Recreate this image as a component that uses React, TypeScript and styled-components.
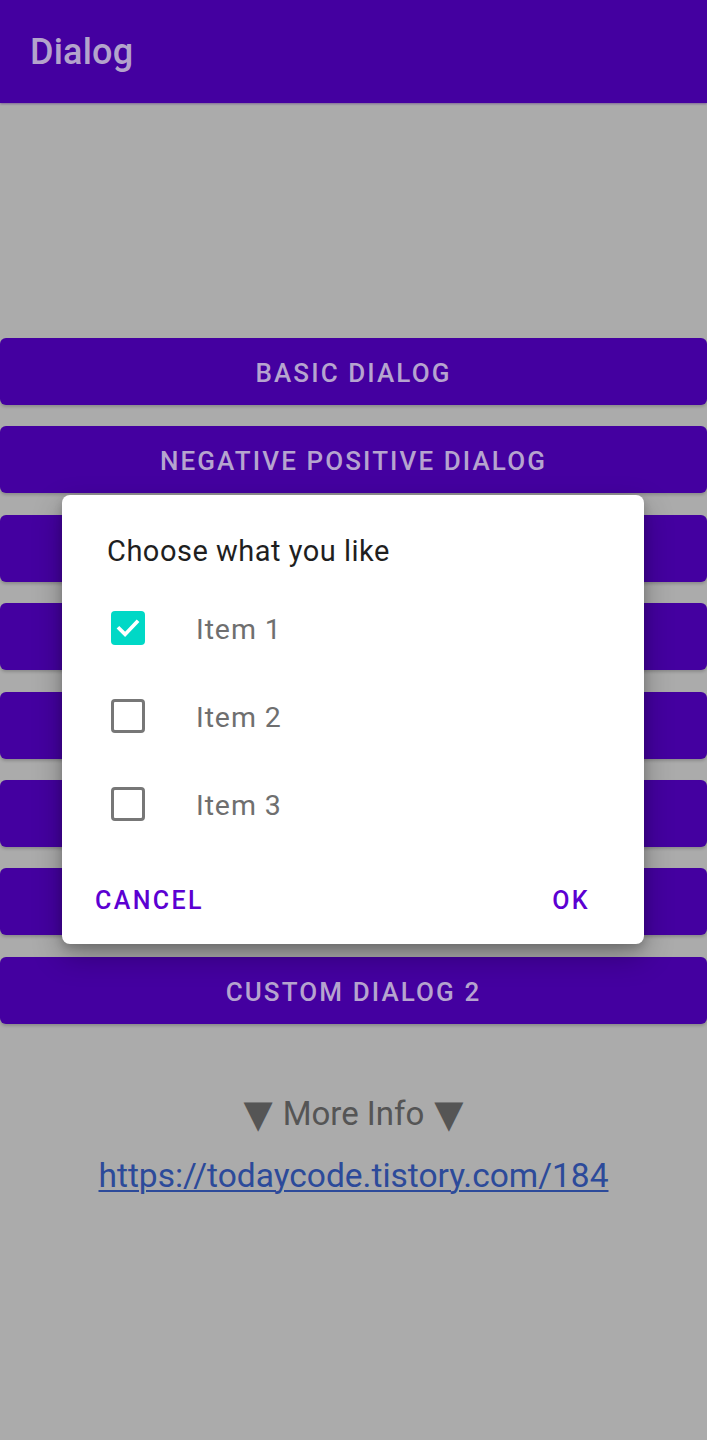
import React, { useState } from 'react';
import styled, { createGlobalStyle } from 'styled-components';

const GlobalStyle = createGlobalStyle`
  html, body {
    margin: 0;
    padding: 0;
    background: #ababab;
    font-family: Roboto, "Noto Sans", "Liberation Sans", sans-serif;
  }
`;

const Screen = styled.div`
  position: relative;
  width: 707px;
  height: 1440px;
  background: #ababab;
  overflow: hidden;
`;

const AppBar = styled.header`
  height: 103px;
  background: #4400a0;
  display: flex;
  align-items: center;
  padding-left: 30px;
  box-sizing: border-box;
  box-shadow: 0 1px 2px rgba(60, 0, 120, 0.4);
`;

const Title = styled.h1`
  margin: 0;
  font-size: 36px;
  font-weight: 500;
  color: #b3a3cc;
  letter-spacing: 0.2px;
`;

const ButtonList = styled.div`
  display: flex;
  flex-direction: column;
  gap: 21.4px;
  padding-top: 235px;
`;

const MenuButton = styled.button`
  height: 67px;
  width: 100%;
  border: none;
  border-radius: 6px;
  padding: 3px 0 0;
  background: #4400a0;
  color: #b6a4cf;
  font-family: Roboto, sans-serif;
  font-size: 26px;
  font-weight: 500;
  letter-spacing: 2.1px;
  text-transform: uppercase;
  box-shadow: 0 2px 3px rgba(0, 0, 0, 0.18);
`;

const Info = styled.div`
  display: flex;
  flex-direction: column;
  align-items: center;
  padding-top: 70px;
  gap: 22px;
`;

const MoreInfo = styled.div`
  display: flex;
  align-items: center;
  gap: 10px;
  font-size: 33px;
  color: #555555;
  line-height: 40px;
`;

const Arrow = styled.span`
  font-family: "DejaVu Sans", sans-serif;
  font-size: 38px;
  line-height: 40px;
  color: #555555;
`;

const Link = styled.a`
  font-size: 33.5px;
  color: #2c4a9a;
  text-decoration: underline;
  text-underline-offset: 3px;
  text-decoration-thickness: 1.5px;
  line-height: 40px;
`;

const Dialog = styled.div`
  position: absolute;
  left: 62px;
  top: 495px;
  width: 582px;
  height: 449px;
  box-sizing: border-box;
  background: #ffffff;
  border-radius: 8px;
  box-shadow: 0 12px 30px rgba(0, 0, 0, 0.28), 0 4px 10px rgba(0, 0, 0, 0.18);
  padding-top: 38px;
  display: flex;
  flex-direction: column;
`;

const DialogTitle = styled.div`
  padding-left: 45px;
  font-size: 29px;
  line-height: 36px;
  color: #1f1f1f;
  letter-spacing: 0.5px;
`;

const Options = styled.div`
  display: flex;
  flex-direction: column;
  margin-top: 15px;
`;

const OptionRow = styled.label`
  height: 88px;
  display: flex;
  align-items: center;
  padding-left: 49px;
`;

const Box = styled.span<{ $checked: boolean }>`
  width: 34px;
  height: 34px;
  box-sizing: border-box;
  border-radius: 4px;
  border: ${p => (p.$checked ? 'none' : '3.5px solid #777777')};
  background: ${p => (p.$checked ? '#00d8c6' : 'transparent')};
  display: flex;
  align-items: center;
  justify-content: center;
`;

const OptionText = styled.span`
  margin-left: 51px;
  font-size: 28.5px;
  color: #6f6f6f;
  letter-spacing: 0.9px;
  padding-top: 2px;
`;

const Actions = styled.div`
  display: flex;
  justify-content: space-between;
  align-items: center;
  padding: 0 54px 0 33px;
  margin-top: 20px;
  height: 64px;
`;

const TextButton = styled.button`
  border: none;
  background: none;
  padding: 0;
  font-family: Roboto, sans-serif;
  font-size: 25px;
  font-weight: 500;
  letter-spacing: 2.4px;
  text-transform: uppercase;
  color: #5c00d2;
`;

const Check = () => (
  <svg width="28" height="28" viewBox="0 0 24 24">
    <path d="M4.5 12.5l5 5L19.5 7" fill="none" stroke="#ffffff" strokeWidth="3.2" strokeLinecap="square" />
  </svg>
);

const buttons = [
  'Basic Dialog',
  'Negative Positive Dialog',
  'Single Choice Dialog',
  'Multi Choice Dialog',
  'List Dialog',
  'Date Picker Dialog',
  'Custom Dialog 1',
  'Custom Dialog 2',
];

export default function App() {
  const [checked, setChecked] = useState([true, false, false]);

  const toggle = (i: number) => {
    setChecked(prev => prev.map((v, idx) => (idx === i ? !v : v)));
  };

  return (
    <Screen>
      <GlobalStyle />
      <AppBar>
        <Title>Dialog</Title>
      </AppBar>
      <ButtonList>
        {buttons.map(b => (
          <MenuButton key={b}>{b}</MenuButton>
        ))}
      </ButtonList>
      <Info>
        <MoreInfo>
          <Arrow>▼</Arrow>
          More Info
          <Arrow>▼</Arrow>
        </MoreInfo>
        <Link href="#">https://todaycode.tistory.com/184</Link>
      </Info>

      <Dialog>
        <DialogTitle>Choose what you like</DialogTitle>
        <Options>
          {['Item 1', 'Item 2', 'Item 3'].map((item, i) => (
            <OptionRow key={item} onClick={() => toggle(i)}>
              <Box $checked={checked[i]}>{checked[i] && <Check />}</Box>
              <OptionText>{item}</OptionText>
            </OptionRow>
          ))}
        </Options>
        <Actions>
          <TextButton>Cancel</TextButton>
          <TextButton>OK</TextButton>
        </Actions>
      </Dialog>
    </Screen>
  );
}
